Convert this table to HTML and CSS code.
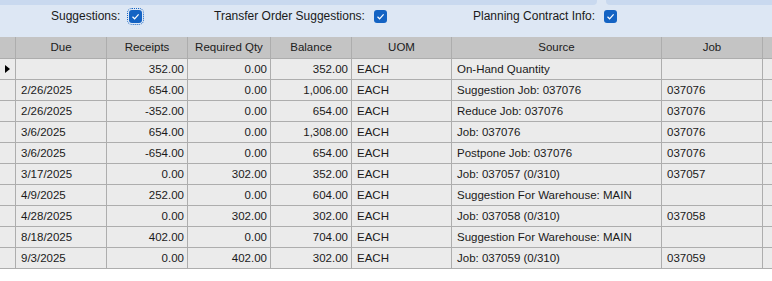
FILE: index.html
```html
<!DOCTYPE html>
<html>
<head>
<meta charset="utf-8">
<link rel="stylesheet" href="styles.css">
</head>
<body>
<div class="panel">
  <div class="strip"><div class="tab tab-left"></div><div class="tab tab-right"></div></div>
  <div class="options">
    <label class="opt opt1"><span>Suggestions:</span><span class="cb focus"><svg viewBox="0 0 13 13" width="13" height="13"><path d="M3.5 6.8 L5.6 8.8 L9.6 4.4" fill="none" stroke="#fff" stroke-width="1.2"/></svg></span></label>
    <label class="opt opt2"><span>Transfer Order Suggestions:</span><span class="cb"><svg viewBox="0 0 13 13" width="13" height="13"><path d="M3.5 6.8 L5.6 8.8 L9.6 4.4" fill="none" stroke="#fff" stroke-width="1.2"/></svg></span></label>
    <label class="opt"><span>Planning Contract Info:</span><span class="cb"><svg viewBox="0 0 13 13" width="13" height="13"><path d="M3.5 6.8 L5.6 8.8 L9.6 4.4" fill="none" stroke="#fff" stroke-width="1.2"/></svg></span></label>
  </div>
</div>
<div class="grid">
  <div class="row head">
    <div class="c"></div><div class="c">Due</div><div class="c">Receipts</div><div class="c">Required Qty</div><div class="c">Balance</div><div class="c">UOM</div><div class="c">Source</div><div class="c">Job</div><div class="c last"></div>
  </div>
  <div class="row"><div class="c ind"><span class="tri"></span></div><div class="c"></div><div class="c n">352.00</div><div class="c n">0.00</div><div class="c n">352.00</div><div class="c">EACH</div><div class="c">On-Hand Quantity</div><div class="c"></div><div class="c last"></div></div>
  <div class="row"><div class="c ind"></div><div class="c">2/26/2025</div><div class="c n">654.00</div><div class="c n">0.00</div><div class="c n">1,006.00</div><div class="c">EACH</div><div class="c">Suggestion Job: 037076</div><div class="c">037076</div><div class="c last"></div></div>
  <div class="row"><div class="c ind"></div><div class="c">2/26/2025</div><div class="c n">-352.00</div><div class="c n">0.00</div><div class="c n">654.00</div><div class="c">EACH</div><div class="c">Reduce Job: 037076</div><div class="c">037076</div><div class="c last"></div></div>
  <div class="row"><div class="c ind"></div><div class="c">3/6/2025</div><div class="c n">654.00</div><div class="c n">0.00</div><div class="c n">1,308.00</div><div class="c">EACH</div><div class="c">Job: 037076</div><div class="c">037076</div><div class="c last"></div></div>
  <div class="row"><div class="c ind"></div><div class="c">3/6/2025</div><div class="c n">-654.00</div><div class="c n">0.00</div><div class="c n">654.00</div><div class="c">EACH</div><div class="c">Postpone Job: 037076</div><div class="c">037076</div><div class="c last"></div></div>
  <div class="row"><div class="c ind"></div><div class="c">3/17/2025</div><div class="c n">0.00</div><div class="c n">302.00</div><div class="c n">352.00</div><div class="c">EACH</div><div class="c">Job: 037057 (0/310)</div><div class="c">037057</div><div class="c last"></div></div>
  <div class="row"><div class="c ind"></div><div class="c">4/9/2025</div><div class="c n">252.00</div><div class="c n">0.00</div><div class="c n">604.00</div><div class="c">EACH</div><div class="c">Suggestion For Warehouse: MAIN</div><div class="c"></div><div class="c last"></div></div>
  <div class="row"><div class="c ind"></div><div class="c">4/28/2025</div><div class="c n">0.00</div><div class="c n">302.00</div><div class="c n">302.00</div><div class="c">EACH</div><div class="c">Job: 037058 (0/310)</div><div class="c">037058</div><div class="c last"></div></div>
  <div class="row"><div class="c ind"></div><div class="c">8/18/2025</div><div class="c n">402.00</div><div class="c n">0.00</div><div class="c n">704.00</div><div class="c">EACH</div><div class="c">Suggestion For Warehouse: MAIN</div><div class="c"></div><div class="c last"></div></div>
  <div class="row"><div class="c ind"></div><div class="c">9/3/2025</div><div class="c n">0.00</div><div class="c n">402.00</div><div class="c n">302.00</div><div class="c">EACH</div><div class="c">Job: 037059 (0/310)</div><div class="c">037059</div><div class="c last"></div></div>
</div>
</body>
</html>
```
FILE: styles.css
```css
html, body {
  margin: 0;
  padding: 0;
  background: #ffffff;
  overflow: hidden;
  font-family: "Liberation Sans", Arial, sans-serif;
  color: #1a1a1a;
}
.panel {
  height: 37px;
  background: #dde7f4;
}
.strip {
  display: flex;
  gap: 9px;
  height: 5px;
}
.tab {
  background: #c9d9ef;
  height: 5px;
}
.tab-left {
  width: 597px;
  border-bottom-right-radius: 4px;
}
.tab-right {
  flex: 1;
  border-bottom-left-radius: 4px;
}
.options {
  display: flex;
  padding-left: 51px;
  padding-top: 4px;
  font-size: 12px;
  line-height: 14px;
}
.opt {
  display: flex;
  align-items: center;
  gap: 9px;
}
.opt1 { width: 163px; }
.opt2 { width: 259px; }
.cb {
  width: 13px;
  height: 13px;
  background: #1463c3;
  border-radius: 3px;
  display: block;
}
.cb svg { display: block; }
.focus {
  outline: 1px dotted #1463c3;
  outline-offset: 1px;
}
.grid {
  font-size: 11.5px;
}
.row {
  display: grid;
  grid-template-columns: 16px 91px 81px 83px 81px 100px 210px 101px 9px;
  height: 21px;
}
.c {
  box-sizing: border-box;
  border-right: 1px solid #adadad;
  border-bottom: 1px solid #adadad;
  background: #ebebeb;
  padding: 0 5px;
  line-height: 20px;
  white-space: nowrap;
  overflow: hidden;
}
.c.last {
  border-right: none;
  padding: 0;
}
.n {
  text-align: right;
  padding-right: 3px;
}
.head {
  height: 22px;
}
.head .c {
  background: #c4c4c4;
  text-align: center;
  line-height: 21px;
  color: #202020;
}
.ind {
  padding: 0;
  display: flex;
  align-items: center;
}
.tri {
  display: block;
  width: 0;
  height: 0;
  margin-left: 5px;
  border-top: 4px solid transparent;
  border-bottom: 4px solid transparent;
  border-left: 5px solid #000;
}
```
